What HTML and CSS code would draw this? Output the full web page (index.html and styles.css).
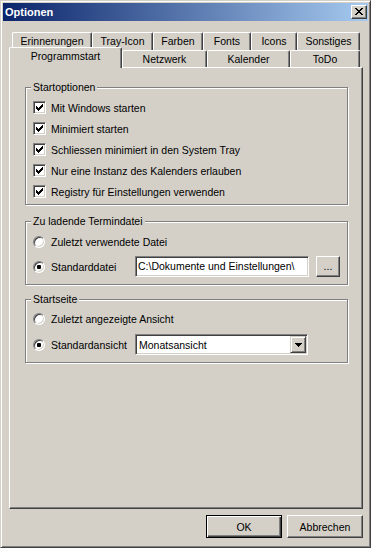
FILE: index.html
```html
<!DOCTYPE html>
<html lang="de">
<head>
<meta charset="utf-8">
<title>Optionen</title>
<link rel="stylesheet" href="styles.css">
</head>
<body>
<div class="window">
  <div class="titlebar">
    <span class="title">Optionen</span>
    <div class="close"><svg width="8" height="7" viewBox="0 0 8 7" shape-rendering="crispEdges"><path fill="#000" d="M0 0h2v1H0z M6 0h2v1H6z M1 1h2v1H1z M5 1h2v1H5z M2 2h4v1H2z M3 3h2v1H3z M2 4h4v1H2z M1 5h2v1H1z M5 5h2v1H5z M0 6h2v1H0z M6 6h2v1H6z"/></svg></div>
  </div>

  <div class="tabrow back">
    <div class="tab t-erin">Erinnerungen</div>
    <div class="tab t-tray">Tray-Icon</div>
    <div class="tab t-farb">Farben</div>
    <div class="tab t-font">Fonts</div>
    <div class="tab t-icon">Icons</div>
    <div class="tab t-sons">Sonstiges</div>
  </div>
  <div class="tabrow front">
    <div class="tab active t-prog">Programmstart</div>
    <div class="tab t-netz">Netzwerk</div>
    <div class="tab t-kal">Kalender</div>
    <div class="tab t-todo">ToDo</div>
  </div>

  <div class="panel">
    <div class="group g-start">
      <div class="legend">Startoptionen</div>
      <div class="checks">
        <div class="row"><span class="cb"><svg width="7" height="7" viewBox="0 0 7 7" shape-rendering="crispEdges"><path fill="#000" d="M0 2h1v3H0z M1 3h1v3H1z M2 4h1v3H2z M3 3h1v3H3z M4 2h1v3H4z M5 1h1v3H5z M6 0h1v3H6z"/></svg></span><span class="lbl">Mit Windows starten</span></div>
        <div class="row"><span class="cb"><svg width="7" height="7" viewBox="0 0 7 7" shape-rendering="crispEdges"><path fill="#000" d="M0 2h1v3H0z M1 3h1v3H1z M2 4h1v3H2z M3 3h1v3H3z M4 2h1v3H4z M5 1h1v3H5z M6 0h1v3H6z"/></svg></span><span class="lbl">Minimiert starten</span></div>
        <div class="row"><span class="cb"><svg width="7" height="7" viewBox="0 0 7 7" shape-rendering="crispEdges"><path fill="#000" d="M0 2h1v3H0z M1 3h1v3H1z M2 4h1v3H2z M3 3h1v3H3z M4 2h1v3H4z M5 1h1v3H5z M6 0h1v3H6z"/></svg></span><span class="lbl">Schliessen minimiert in den System Tray</span></div>
        <div class="row"><span class="cb"><svg width="7" height="7" viewBox="0 0 7 7" shape-rendering="crispEdges"><path fill="#000" d="M0 2h1v3H0z M1 3h1v3H1z M2 4h1v3H2z M3 3h1v3H3z M4 2h1v3H4z M5 1h1v3H5z M6 0h1v3H6z"/></svg></span><span class="lbl">Nur eine Instanz des Kalenders erlauben</span></div>
        <div class="row"><span class="cb"><svg width="7" height="7" viewBox="0 0 7 7" shape-rendering="crispEdges"><path fill="#000" d="M0 2h1v3H0z M1 3h1v3H1z M2 4h1v3H2z M3 3h1v3H3z M4 2h1v3H4z M5 1h1v3H5z M6 0h1v3H6z"/></svg></span><span class="lbl">Registry für Einstellungen verwenden</span></div>
      </div>
    </div>

    <div class="group g-datei">
      <div class="legend">Zu ladende Termindatei</div>
      <div class="opts opts-datei">
        <div class="row r1"><span class="radio"></span><span class="lbl">Zuletzt verwendete Datei</span></div>
        <div class="row r2">
          <div class="choice"><span class="radio"><span class="dot"></span></span><span class="lbl">Standarddatei</span></div>
          <div class="field path">C:\Dokumente und Einstellungen\</div>
          <div class="btn dots">...</div>
        </div>
      </div>
    </div>

    <div class="group g-seite">
      <div class="legend">Startseite</div>
      <div class="opts opts-seite">
        <div class="row r1b"><span class="radio"></span><span class="lbl">Zuletzt angezeigte Ansicht</span></div>
        <div class="row r2b">
          <div class="choice"><span class="radio"><span class="dot"></span></span><span class="lbl">Standardansicht</span></div>
          <div class="field combo">
            <span class="combo-text">Monatsansicht</span>
            <span class="drop"><svg width="7" height="4" viewBox="0 0 7 4" shape-rendering="crispEdges"><path fill="#000" d="M0 0h7v1H0z M1 1h5v1H1z M2 2h3v1H2z M3 3h1v1H3z"/></svg></span>
          </div>
        </div>
      </div>
    </div>
  </div>

  <div class="actions">
    <div class="btn default">OK</div>
    <div class="btn">Abbrechen</div>
  </div>
</div>
</body>
</html>
```

FILE: styles.css
```css
* { box-sizing: border-box; }
html, body { margin: 0; padding: 0; }
body {
  width: 371px;
  height: 548px;
  overflow: hidden;
  background: #d4d0c8;
  font-family: "Liberation Sans", Arial, sans-serif;
  font-size: 10.5px;
  line-height: 13px;
  color: #000;
}

.window {
  width: 371px;
  height: 548px;
  border: 1px solid;
  border-color: #d4d0c8 #404040 #404040 #d4d0c8;
  box-shadow: inset 1px 1px #fff, inset -1px -1px #808080;
  padding: 2px;
  background: #d4d0c8;
  display: flex;
  flex-direction: column;
}

.titlebar {
  height: 18px;
  flex: 0 0 18px;
  display: flex;
  align-items: center;
  padding-left: 2px;
  background: linear-gradient(to right, #0a246a, #a6caf0);
}
.title {
  flex: 1;
  color: #fff;
  font-size: 11px;
  font-weight: bold;
  padding-top: 1px;
}
.close {
  width: 16px;
  height: 14px;
  margin-right: 1px;
  background: #d4d0c8;
  border: 1px solid;
  border-color: #fff #404040 #404040 #fff;
  box-shadow: inset -1px -1px #808080;
  display: flex;
  align-items: center;
  justify-content: center;
  padding: 0 1px 1px 0;
}
.close svg { display: block; }

/* tabs */
.tabrow { display: flex; }
.tabrow.back { height: 18px; margin: 11px 0 0 9px; }
.tabrow.front { height: 17px; margin-left: 6px; align-items: flex-end; }
.tab {
  height: 100%;
  background: #d4d0c8;
  border-top: 1px solid #fff;
  border-left: 1px solid #fff;
  border-right: 1px solid #404040;
  box-shadow: inset -1px 0 #808080;
  border-radius: 2px 2px 0 0;
  text-align: center;
  padding-top: 2px;
  white-space: nowrap;
}
.tab.active {
  height: 21px;
  margin-bottom: -1px;
  position: relative;
  z-index: 1;
}
.t-erin { width: 80px; }
.t-tray { width: 61px; }
.t-farb { width: 50px; }
.t-font { width: 48px; }
.t-icon { width: 46px; }
.t-sons { width: 63px; }
.t-prog { width: 113px; }
.t-netz { width: 85px; }
.t-kal { width: 83px; }
.t-todo { width: 70px; }

/* panel */
.panel {
  margin-left: 6px;
  width: 354px;
  height: 442px;
  flex: 0 0 442px;
  border: 1px solid;
  border-color: #fff #404040 #404040 #fff;
  box-shadow: inset -1px -1px #808080;
  padding: 19px 0 0 15px;
}

.group {
  width: 323px;
  border: 1px solid #808080;
  box-shadow: 1px 1px 0 #fff, inset 1px 1px 0 #fff;
}
.g-start { height: 118px; }
.g-datei { height: 64px; margin-top: 16px; }
.g-seite { height: 64px; margin-top: 14px; }

.legend {
  width: fit-content;
  height: 13px;
  margin: -7px 0 0 5px;
  padding: 0 2px;
  background: #d4d0c8;
  white-space: nowrap;
}

.checks { padding-top: 3px; }
.row {
  display: flex;
  align-items: center;
  padding-left: 7px;
  white-space: nowrap;
}
.checks .row { height: 21px; }
.lbl { padding-top: 1px; }

.cb {
  width: 13px;
  height: 13px;
  flex: 0 0 13px;
  margin-right: 5px;
  background: #fff;
  border: 1px solid;
  border-color: #808080 #fff #fff #808080;
  box-shadow: inset 1px 1px #404040, inset -1px -1px #d4d0c8;
  display: flex;
  align-items: center;
  justify-content: center;
}
.cb svg { display: block; }

.radio {
  width: 12px;
  height: 12px;
  flex: 0 0 12px;
  margin-right: 6px;
  border-radius: 50%;
  background: #fff;
  border: 1px solid;
  border-color: #808080 #fff #fff #808080;
  box-shadow: inset 1px 1px #404040, inset -1px -1px #d4d0c8;
  display: flex;
  align-items: center;
  justify-content: center;
}
.dot {
  width: 4px;
  height: 4px;
  border-radius: 1px;
  background: #000;
}

.opts-datei { padding-top: 3px; }
.opts-datei .r1 { height: 22px; }
.opts-datei .r2 { height: 21px; margin-top: 3px; }
.opts-seite { padding-top: 1px; }
.opts-seite .r1b { height: 23px; }
.opts-seite .r2b { height: 21px; margin-top: 4px; }

.choice {
  width: 102px;
  flex: 0 0 102px;
  display: flex;
  align-items: center;
}

.field {
  height: 21px;
  background: #fff;
  border: 1px solid;
  border-color: #808080 #fff #fff #808080;
  box-shadow: inset 1px 1px #404040, inset -1px -1px #d4d0c8;
}
.path {
  width: 174px;
  padding: 3px 0 0 2px;
  overflow: hidden;
  white-space: nowrap;
}
.combo {
  width: 173px;
  padding: 1px;
  display: flex;
  align-items: center;
}
.combo-text { flex: 1; padding: 1px 0 0 2px; }
.drop {
  width: 16px;
  height: 17px;
  background: #d4d0c8;
  border: 1px solid;
  border-color: #d4d0c8 #404040 #404040 #d4d0c8;
  box-shadow: inset 1px 1px #fff, inset -1px -1px #808080;
  display: flex;
  align-items: center;
  justify-content: center;
}
.drop svg { display: block; }

.btn {
  height: 23px;
  width: 76px;
  background: #d4d0c8;
  border: 1px solid;
  border-color: #fff #404040 #404040 #fff;
  box-shadow: inset -1px -1px #808080;
  display: flex;
  align-items: center;
  justify-content: center;
  padding-top: 1px;
}
.btn.dots {
  width: 24px;
  height: 21px;
  margin-left: 7px;
  align-items: flex-end;
  padding-bottom: 3px;
}
.btn.default {
  border: 1px solid #000;
  box-shadow: inset 1px 1px #fff, inset -1px -1px #404040, inset -2px -2px #808080;
}

.actions {
  display: flex;
  justify-content: flex-end;
  gap: 5px;
  margin-top: 6px;
  padding-right: 5px;
}
```
